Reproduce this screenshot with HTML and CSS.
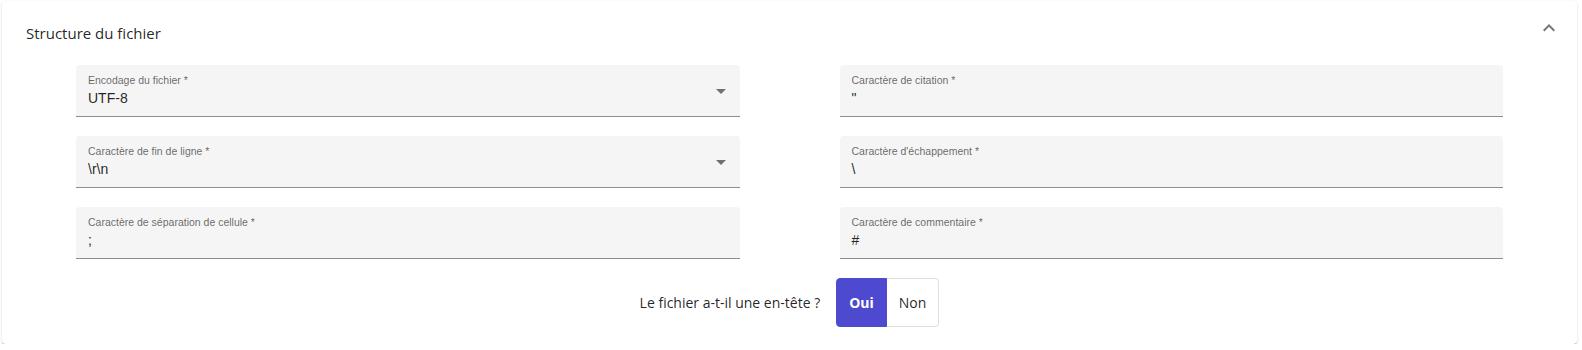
FILE: index.html
```html
<!DOCTYPE html>
<html lang="fr">
<head>
<meta charset="utf-8">
<title>Structure du fichier</title>
<link rel="stylesheet" href="styles.css">
</head>
<body>
<section class="card">
  <header class="card-header">
    <h2 class="card-title">Structure du fichier</h2>
    <svg class="chevron" viewBox="0 0 24 24" width="24" height="24" aria-hidden="true"><path d="M12 8l-6 6 1.41 1.41L12 10.83l4.59 4.58L18 14z"/></svg>
  </header>
  <div class="form-grid">
    <div class="field select">
      <div class="field-body">
        <div class="field-label">Encodage du fichier *</div>
        <div class="field-value">UTF-8</div>
      </div>
      <span class="arrow"></span>
    </div>
    <div class="field">
      <div class="field-body">
        <div class="field-label">Caractère de citation *</div>
        <div class="field-value">"</div>
      </div>
    </div>
    <div class="field select">
      <div class="field-body">
        <div class="field-label">Caractère de fin de ligne *</div>
        <div class="field-value">\r\n</div>
      </div>
      <span class="arrow"></span>
    </div>
    <div class="field">
      <div class="field-body">
        <div class="field-label">Caractère d'échappement *</div>
        <div class="field-value">\</div>
      </div>
    </div>
    <div class="field">
      <div class="field-body">
        <div class="field-label">Caractère de séparation de cellule *</div>
        <div class="field-value">;</div>
      </div>
    </div>
    <div class="field">
      <div class="field-body">
        <div class="field-label">Caractère de commentaire *</div>
        <div class="field-value">#</div>
      </div>
    </div>
  </div>
  <div class="toggle-row">
    <span class="toggle-label">Le fichier a-t-il une en-tête ?</span>
    <div class="toggle-group">
      <button class="toggle-btn active">Oui</button>
      <button class="toggle-btn">Non</button>
    </div>
  </div>
</section>
</body>
</html>
```

FILE: styles.css
```css
html, body {
  margin: 0;
  padding: 0;
  background: #ffffff;
}

body {
  padding: 1px 5px 0 2px;
  font-family: "Open Sans", "Liberation Sans", Arial, sans-serif;
}

.card {
  background: #fff;
  border-radius: 4px;
  box-shadow: 0 2px 1px -1px rgba(0,0,0,.2), 0 1px 1px 0 rgba(0,0,0,.14), 0 1px 3px 0 rgba(0,0,0,.12);
  padding: 0 74px 17px 74px;
}

.card-header {
  display: flex;
  align-items: flex-start;
  justify-content: space-between;
  padding: 15px 0 0 0;
  margin: 0 -58px 0 -50px;
}

.card-title {
  margin: 6px 0 0 0;
  font-size: 15px;
  line-height: 22px;
  font-weight: 400;
  color: rgba(0,0,0,.87);
}

.chevron {
  display: block;
  fill: rgba(0,0,0,.54);
}

.form-grid {
  margin-top: 21px;
  display: grid;
  grid-template-columns: 1fr 1fr;
  column-gap: 100px;
  row-gap: 19px;
}

.field {
  display: flex;
  align-items: center;
  background: #f5f5f5;
  border-radius: 4px 4px 0 0;
  border-bottom: 1px solid rgba(0,0,0,.42);
  padding: 9px 14px 11px 12px;
  font-family: "Liberation Sans", Arial, sans-serif;
}

.field-body {
  flex: 1;
  min-width: 0;
}

.field-label {
  font-size: 10.5px;
  line-height: 12px;
  color: rgba(0,0,0,.6);
}

.field-value {
  margin-top: 5px;
  font-size: 14px;
  line-height: 14px;
  color: rgba(0,0,0,.87);
}

.arrow {
  margin-top: 4px;
  width: 0;
  height: 0;
  border-left: 5px solid transparent;
  border-right: 5px solid transparent;
  border-top: 5px solid rgba(0,0,0,.54);
}

.toggle-row {
  margin-top: 19px;
  display: flex;
  justify-content: center;
  align-items: center;
  gap: 16px;
}

.toggle-label {
  font-size: 14px;
  color: rgba(0,0,0,.87);
}

.toggle-group {
  display: flex;
  height: 49px;
}

.toggle-btn {
  font-family: "Open Sans", "Liberation Sans", Arial, sans-serif;
  font-size: 14px;
  padding: 0 12px;
  margin: 0;
  background: #fff;
  color: rgba(0,0,0,.87);
  border: 1px solid #e0e0e0;
  border-left: none;
  border-radius: 0 4px 4px 0;
  cursor: pointer;
}

.toggle-btn.active {
  background: #4d4acf;
  color: #fff;
  font-weight: 700;
  border: 1px solid #4d4acf;
  border-radius: 4px 0 0 4px;
}
```
